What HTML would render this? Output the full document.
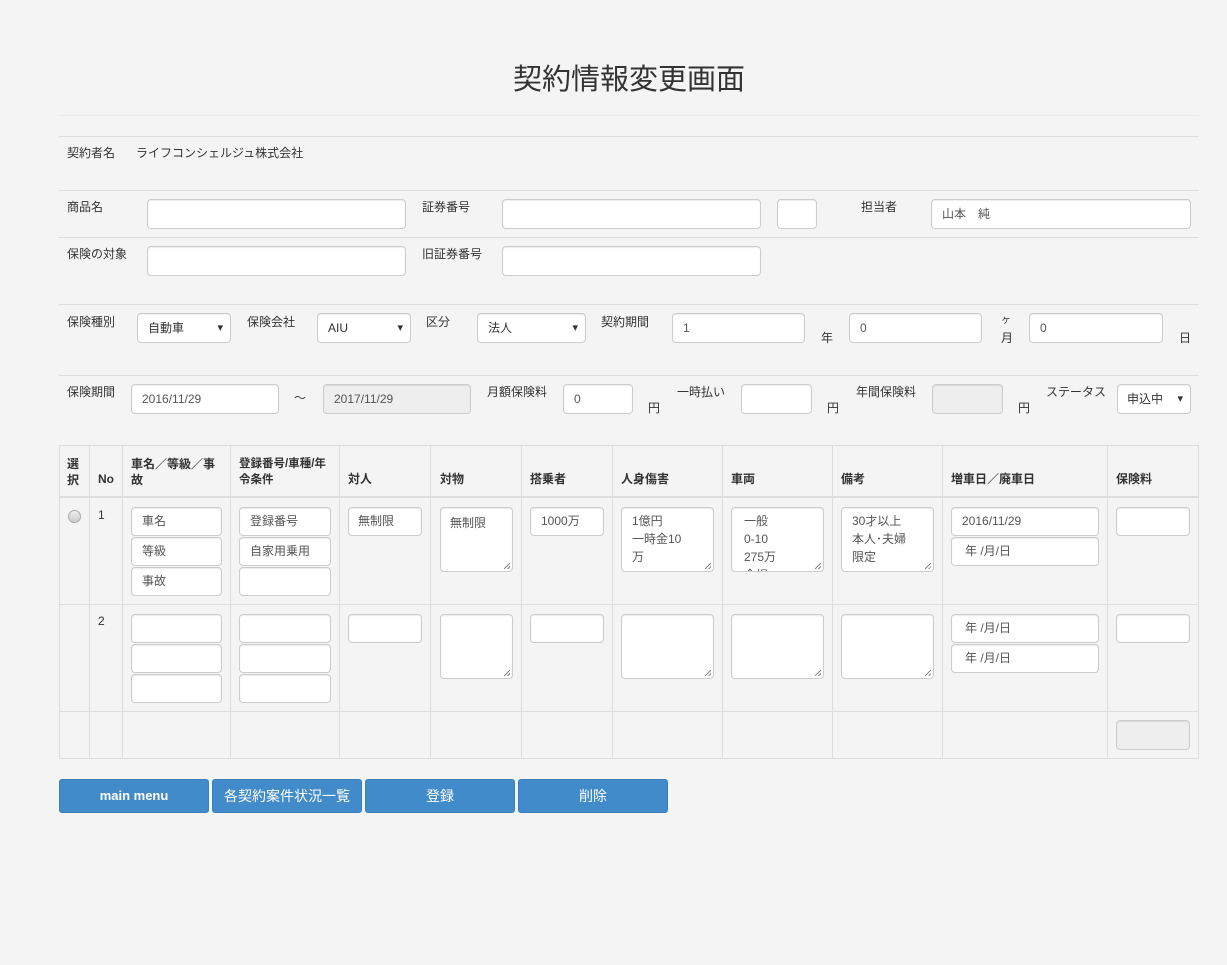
<!DOCTYPE html>
<html><head><meta charset="utf-8"><style>
body{margin:0;background:#f4f4f4;width:1227px;height:965px;position:relative;overflow:hidden;font-family:"Liberation Sans","Noto Sans CJK JP",sans-serif;color:#333}
.t{position:absolute;font-size:12px;line-height:14px;white-space:nowrap}
.b{font-weight:bold}
.i{position:absolute;background:#fff;border:1px solid #ccc;border-radius:4px;box-sizing:border-box;font-size:12px;color:#555;padding-left:10px;white-space:nowrap;overflow:hidden;box-shadow:inset 0 1px 1px rgba(0,0,0,.075)}
.d{background:#eee}
.s::after{content:"▾";position:absolute;right:7px;top:50%;transform:translateY(-50%);font-size:11px;color:#333}
.h{position:absolute;height:1px;background:#ddd}
.v{position:absolute;width:1px;background:#ddd;top:445px;height:314px}
.ta::after{content:"";position:absolute;right:2px;bottom:2px;width:6px;height:6px;background:linear-gradient(135deg,transparent 45%,#888 45%,#888 55%,transparent 55%,transparent 75%,#888 75%,#888 85%,transparent 85%)}
.sb{position:absolute;right:0;top:0;width:17px;height:100%;background:#f0f0f0;border-left:1px solid #e4e4e4}
.btn{position:absolute;top:779px;height:34px;width:150px;background:#428bca;border:1px solid #3a7fc0;border-radius:3px;box-sizing:border-box;color:#fff;font-size:14px;text-align:center;line-height:32px}
</style></head><body>
<div class="t" style="left:0;width:1258px;text-align:center;top:62px;font-size:29px;line-height:36px">契約情報変更画面</div>
<div class="h" style="left:59px;width:1140px;top:115px;background:#eaeaea"></div>
<div class="h" style="left:59px;width:1140px;top:136px"></div>
<div class="t" style="left:67px;top:146px">契約者名</div>
<div class="t" style="left:136px;top:146px">ライフコンシェルジュ株式会社</div>
<div class="h" style="left:59px;width:1140px;top:190px"></div>
<div class="t" style="left:67px;top:200px">商品名</div>
<div class="i" style="left:147px;top:199px;width:259px;height:30px"></div>
<div class="t" style="left:422px;top:200px">証券番号</div>
<div class="i" style="left:502px;top:199px;width:259px;height:30px"></div>
<div class="i" style="left:777px;top:199px;width:40px;height:30px"></div>
<div class="t" style="left:861px;top:200px">担当者</div>
<div class="i" style="left:931px;top:199px;width:260px;height:30px;line-height:28px">山本　純</div>
<div class="h" style="left:59px;width:1140px;top:237px"></div>
<div class="t" style="left:67px;top:247px">保険の対象</div>
<div class="i" style="left:147px;top:246px;width:259px;height:30px"></div>
<div class="t" style="left:422px;top:247px">旧証券番号</div>
<div class="i" style="left:502px;top:246px;width:259px;height:30px"></div>
<div class="h" style="left:59px;width:1140px;top:304px"></div>
<div class="t" style="left:67px;top:315px">保険種別</div>
<div class="i s" style="left:137px;top:313px;width:94px;height:30px;line-height:28px;color:#333">自動車</div>
<div class="t" style="left:247px;top:315px">保険会社</div>
<div class="i s" style="left:317px;top:313px;width:94px;height:30px;line-height:28px;color:#333">AIU</div>
<div class="t" style="left:426px;top:315px">区分</div>
<div class="i s" style="left:477px;top:313px;width:109px;height:30px;line-height:28px;color:#333">法人</div>
<div class="t" style="left:601px;top:315px">契約期間</div>
<div class="i" style="left:672px;top:313px;width:133px;height:30px;line-height:28px">1</div>
<div class="t" style="left:821px;top:331px">年</div>
<div class="i" style="left:849px;top:313px;width:133px;height:30px;line-height:28px">0</div>
<div class="t" style="left:1001px;top:314px;font-size:10px">ヶ</div>
<div class="t" style="left:1001px;top:331px">月</div>
<div class="i" style="left:1029px;top:313px;width:134px;height:30px;line-height:28px">0</div>
<div class="t" style="left:1179px;top:331px">日</div>
<div class="h" style="left:59px;width:1140px;top:375px"></div>
<div class="t" style="left:67px;top:385px">保険期間</div>
<div class="i" style="left:131px;top:384px;width:148px;height:30px;line-height:28px">2016/11/29</div>
<div class="t" style="left:294px;top:391px">～</div>
<div class="i d" style="left:323px;top:384px;width:148px;height:30px;line-height:28px">2017/11/29</div>
<div class="t" style="left:487px;top:385px">月額保険料</div>
<div class="i" style="left:563px;top:384px;width:70px;height:30px;line-height:28px">0</div>
<div class="t" style="left:648px;top:401px">円</div>
<div class="t" style="left:677px;top:385px">一時払い</div>
<div class="i" style="left:741px;top:384px;width:71px;height:30px"></div>
<div class="t" style="left:827px;top:401px">円</div>
<div class="t" style="left:856px;top:385px">年間保険料</div>
<div class="i d" style="left:932px;top:384px;width:71px;height:30px"></div>
<div class="t" style="left:1018px;top:401px">円</div>
<div class="t" style="left:1046px;top:385px">ステータス</div>
<div class="i s" style="left:1117px;top:384px;width:74px;height:30px;line-height:28px;color:#333;padding-left:9px">申込中</div>

<!-- table -->
<div class="h" style="left:59px;width:1140px;top:445px"></div>
<div class="h" style="left:59px;width:1140px;top:496px;height:2px"></div>
<div class="h" style="left:59px;width:1140px;top:604px"></div>
<div class="h" style="left:59px;width:1140px;top:711px"></div>
<div class="h" style="left:59px;width:1140px;top:758px"></div>
<div class="v" style="left:59px"></div><div class="v" style="left:89px"></div><div class="v" style="left:122px"></div><div class="v" style="left:230px"></div><div class="v" style="left:339px"></div><div class="v" style="left:430px"></div><div class="v" style="left:521px"></div><div class="v" style="left:612px"></div><div class="v" style="left:722px"></div><div class="v" style="left:832px"></div><div class="v" style="left:942px"></div><div class="v" style="left:1107px"></div><div class="v" style="left:1198px"></div>
<div class="t b" style="left:67px;top:456px;line-height:16px">選<br>択</div>
<div class="t b" style="left:98px;top:472px">No</div>
<div class="t b" style="left:131px;top:456px;line-height:16px">車名／等級／事<br>故</div>
<div class="t b" style="left:239px;top:456px;line-height:16px;font-size:11.5px">登録番号/車種/年<br>令条件</div>
<div class="t b" style="left:348px;top:472px">対人</div>
<div class="t b" style="left:440px;top:472px">対物</div>
<div class="t b" style="left:530px;top:472px">搭乗者</div>
<div class="t b" style="left:621px;top:472px">人身傷害</div>
<div class="t b" style="left:731px;top:472px">車両</div>
<div class="t b" style="left:841px;top:472px">備考</div>
<div class="t b" style="left:951px;top:472px">増車日／廃車日</div>
<div class="t b" style="left:1116px;top:472px">保険料</div>

<div style="position:absolute;left:68px;top:510px;width:11px;height:11px;border-radius:50%;border:1px solid #aaa;background:linear-gradient(#eee,#ccc)"></div>
<div class="t" style="left:98px;top:508px">1</div>
<div class="i" style="left:131px;top:507px;width:91px;height:29px;line-height:27px">車名</div>
<div class="i" style="left:131px;top:537px;width:91px;height:29px;line-height:27px">等級</div>
<div class="i" style="left:131px;top:567px;width:91px;height:29px;line-height:27px">事故</div>
<div class="i" style="left:239px;top:507px;width:92px;height:29px;line-height:27px">登録番号</div>
<div class="i" style="left:239px;top:537px;width:92px;height:29px;line-height:27px">自家用乗用</div>
<div class="i" style="left:239px;top:567px;width:92px;height:29px"></div>
<div class="i" style="left:348px;top:507px;width:74px;height:29px;line-height:27px;padding-left:9px">無制限</div>
<div class="i ta" style="left:440px;top:507px;width:73px;height:65px;padding-left:9px;padding-top:6px">無制限</div>
<div class="i" style="left:530px;top:507px;width:74px;height:29px;line-height:27px">1000万</div>
<div class="i ta" style="left:621px;top:507px;width:93px;height:65px;padding-left:10px;padding-top:4px;line-height:18px">1億円<br>一時金10<br>万</div>
<div class="i ta" style="left:731px;top:507px;width:93px;height:65px;padding-left:12px;padding-top:4px;line-height:18px">一般<br>0-10<br>275万<br>全損</div>
<div class="i ta" style="left:841px;top:507px;width:93px;height:65px;padding-left:10px;padding-top:4px;line-height:18px">30才以上<br>本人･夫婦<br>限定<br>…</div>
<div class="i" style="left:951px;top:507px;width:148px;height:29px;line-height:27px">2016/11/29</div>
<div class="i" style="left:951px;top:537px;width:148px;height:29px;line-height:27px;padding-left:13px">年 /月/日</div>
<div class="i" style="left:1116px;top:507px;width:74px;height:29px"></div>

<div class="t" style="left:98px;top:614px">2</div>
<div class="i" style="left:131px;top:614px;width:91px;height:29px"></div>
<div class="i" style="left:131px;top:644px;width:91px;height:29px"></div>
<div class="i" style="left:131px;top:674px;width:91px;height:29px"></div>
<div class="i" style="left:239px;top:614px;width:92px;height:29px"></div>
<div class="i" style="left:239px;top:644px;width:92px;height:29px"></div>
<div class="i" style="left:239px;top:674px;width:92px;height:29px"></div>
<div class="i" style="left:348px;top:614px;width:74px;height:29px"></div>
<div class="i ta" style="left:440px;top:614px;width:73px;height:65px"></div>
<div class="i" style="left:530px;top:614px;width:74px;height:29px"></div>
<div class="i ta" style="left:621px;top:614px;width:93px;height:65px"></div>
<div class="i ta" style="left:731px;top:614px;width:93px;height:65px"></div>
<div class="i ta" style="left:841px;top:614px;width:93px;height:65px"></div>
<div class="i" style="left:951px;top:614px;width:148px;height:29px;line-height:27px;padding-left:13px">年 /月/日</div>
<div class="i" style="left:951px;top:644px;width:148px;height:29px;line-height:27px;padding-left:13px">年 /月/日</div>
<div class="i" style="left:1116px;top:614px;width:74px;height:29px"></div>
<div class="i d" style="left:1116px;top:720px;width:74px;height:30px"></div>

<div class="btn" style="left:59px;font-weight:bold;font-size:13px">main menu</div>
<div class="btn" style="left:212px">各契約案件状況一覧</div>
<div class="btn" style="left:365px">登録</div>
<div class="btn" style="left:518px">削除</div>
</body></html>
